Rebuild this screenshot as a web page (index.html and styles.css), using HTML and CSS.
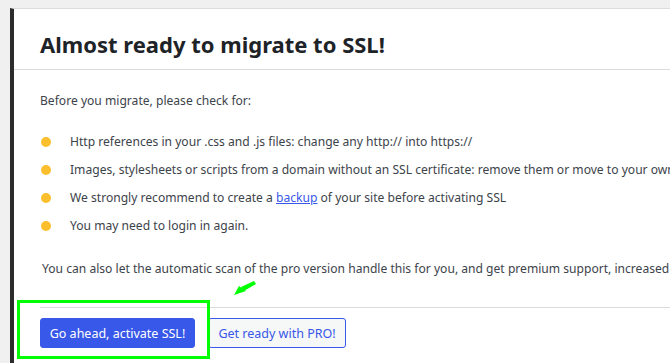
FILE: index.html
```html
<!DOCTYPE html>
<html lang="en">
<head>
    <meta charset="UTF-8">
    <title>Almost ready to migrate to SSL</title>
    <link rel="stylesheet" href="styles.css">
</head>
<body>
    <div class="page">
        <div class="notice">
            <div class="notice-header">
                <h1>Almost ready to migrate to SSL!</h1>
            </div>

            <div class="notice-body">
                <p class="intro">Before you migrate, please check for:</p>
                <ul class="checks">
                    <li>Http references in your .css and .js files: change any http:// into https://</li>
                    <li>Images, stylesheets or scripts from a domain without an SSL certificate: remove them or move to your own server.</li>
                    <li>We strongly recommend to create a <a href="#">backup</a> of your site before activating SSL</li>
                    <li>You may need to login in again.</li>
                </ul>
                <p class="pro-note">You can also let the automatic scan of the pro version handle this for you, and get premium support, increased security with HSTS and more!</p>
            </div>

            <div class="notice-footer">
                <button class="btn btn-primary">Go ahead, activate SSL!</button>
                <button class="btn btn-secondary">Get ready with PRO!</button>
            </div>

            <!-- annotation drawn over the screenshot -->
            <svg class="mark-arrow" width="24" height="16" viewBox="0 0 24 16">
                <path d="M1 14 L6 5 L13 10 Z" fill="#00ff00"/>
                <path d="M8 6 L21 0 L23 3 L11 10 Z" fill="#00ff00"/>
            </svg>
            <div class="mark-box"></div>
        </div>
    </div>
</body>
</html>
```

FILE: styles.css
```css
*{
    margin: 0;
    padding: 0;
    box-sizing: border-box;
}

body{
    background-color: #f0f0f1;
    font-family: "Noto Sans", "Open Sans", sans-serif;
    font-size: 12.1px;
    color: #3c434a;
    overflow: hidden;
}

.page{
    padding-top: 8px;
    padding-left: 10px;
}

.notice{
    position: relative;
    width: 900px;
    min-height: 360px;
    background-color: #fff;
    border-top: 1px solid #dcdcde;
    border-left: 4px solid #2c2c2c;
}

.notice-header{
    height: 61px;
    padding-left: 26px;
    padding-top: 21px;
    border-bottom: 1px solid #dcdcde;
}

.notice-header h1{
    font-size: 22px;
    line-height: 28px;
    font-weight: 700;
    color: #1d2327;
}

.notice-body{
    padding-left: 26px;
    padding-top: 21px;
}

.intro{
    line-height: 20px;
}

.checks{
    list-style: none;
    margin-top: 21px;
}

.checks li{
    position: relative;
    line-height: 20px;
    margin-bottom: 8px;
    padding-left: 30px;
    white-space: nowrap;
}

.checks li::before{
    content: "";
    position: absolute;
    left: 1px;
    top: 5px;
    width: 10px;
    height: 10px;
    border-radius: 50%;
    background-color: #fbbf2d;
}

.checks a{
    color: #3858e9;
}

.pro-note{
    margin-top: 23px;
    padding-left: 2px;
    line-height: 20px;
    white-space: nowrap;
}

.notice-footer{
    display: flex;
    gap: 13px;
    margin-top: 28px;
    margin-left: 26px;
    padding-top: 10px;
    border-top: 1px solid #dcdcde;
}

.btn{
    height: 30px;
    font-family: inherit;
    font-size: 12.5px;
    border-radius: 3px;
    cursor: pointer;
}

.btn-primary{
    width: 155px;
    background-color: #3858e9;
    border: 1px solid #3858e9;
    color: #fff;
}

.btn-secondary{
    width: 138px;
    background-color: #f6f7f7;
    border: 1px solid #3858e9;
    color: #3858e9;
}

.mark-arrow{
    position: absolute;
    left: 219px;
    top: 272px;
}

.mark-box{
    position: absolute;
    left: 3px;
    top: 291px;
    width: 193px;
    height: 59px;
    border: 3px solid #00ff00;
}
```
